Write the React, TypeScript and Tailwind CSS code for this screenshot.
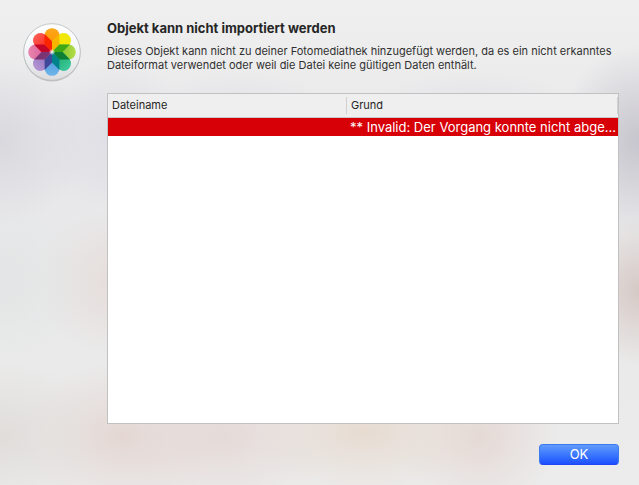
import { useState } from 'react'

interface FailedImport {
  fileName: string
  reason: string
}

const failedImports: FailedImport[] = [
  { fileName: '', reason: '** Invalid: Der Vorgang konnte nicht abge...' },
]

// Clockwise from the top
const petals = [
  { from: '#ff9500', to: '#fba81c' },
  { from: '#ffe600', to: '#ece80d' },
  { from: '#7fc62c', to: '#b5dc4a' },
  { from: '#1fb06a', to: '#3ec9a0' },
  { from: '#4f9ade', to: '#70b6ea' },
  { from: '#9277c4', to: '#b594d2' },
  { from: '#d8609c', to: '#e886ae' },
  { from: '#ff2a1c', to: '#fb5e55' },
]

// Where each petal crosses the next one
const overlaps = ['#f7b500', '#3fa814', '#0b7f35', '#00838a', '#3f4798', '#793574', '#c3062b', '#fb2500']

function PhotosIcon() {
  return (
    <svg viewBox="-32 -32 64 64" className="block w-16 h-16" role="img" aria-label="Fotos">
      <defs>
        <linearGradient id="disc" x1="0" y1="0" x2="0" y2="1">
          <stop offset="0" stopColor="#ffffff" />
          <stop offset="0.5" stopColor="#f3f6f8" />
          <stop offset="1" stopColor="#dcdcde" />
        </linearGradient>
        <radialGradient id="glow">
          <stop offset="0" stopColor="#ffffff" />
          <stop offset="0.35" stopColor="#ffffff" stopOpacity="0.7" />
          <stop offset="1" stopColor="#ffffff" stopOpacity="0" />
        </radialGradient>
        {petals.map((petal, i) => (
          <linearGradient key={i} id={`petal-${i}`} x1="0" y1="1" x2="0" y2="0">
            <stop offset="0.3" stopColor={petal.from} />
            <stop offset="1" stopColor={petal.to} />
          </linearGradient>
        ))}
      </defs>
      <circle cy="0.8" r="28.6" fill="#000000" opacity="0.18" />
      <circle r="28.3" fill="url(#disc)" stroke="#b9bbbd" strokeWidth="0.8" />
      {petals.map((_, i) => (
        <path
          key={i}
          d="M0 0L-7.4 -7.4V-16.4A7.4 7.4 0 0 1 7.4 -16.4V-7.4Z"
          fill={`url(#petal-${i})`}
          transform={`rotate(${i * 45})`}
        />
      ))}
      {overlaps.map((color, i) => (
        <path
          key={i}
          d="M0 0V-10.5L7.4 -17.9L7.4 -7.4Z"
          fill={color}
          transform={`rotate(${i * 45})`}
        />
      ))}
      <circle r="3.2" fill="url(#glow)" />
    </svg>
  )
}

function ImportErrorTable({ rows }: { rows: FailedImport[] }) {
  return (
    <div className="flex-1 bg-white border border-[#c1c1c1]">
      <table className="w-full table-fixed border-separate border-spacing-0 text-left">
        <thead className="bg-[#efefef] text-[11px] text-[#262626]">
          <tr className="h-6">
            <th scope="col" className="w-[239px] p-0 font-normal border-b border-[#c8c8c8]">
              <div className="h-[17px] pl-1 leading-[17px] border-r border-[#d0d0d0]">Dateiname</div>
            </th>
            <th scope="col" className="p-0 font-normal border-b border-[#c8c8c8]">
              <div className="h-[17px] pl-1 leading-[17px] border-r border-[#d0d0d0]">Grund</div>
            </th>
          </tr>
        </thead>
        <tbody className="text-[13px] text-white">
          {rows.map((row, i) => (
            <tr key={i} className="h-[18px] bg-[#d70007]">
              <td className="p-0 pl-1 leading-[18px] truncate">{row.fileName}</td>
              <td className="p-0 pl-[3px] leading-[18px] truncate">{row.reason}</td>
            </tr>
          ))}
        </tbody>
      </table>
    </div>
  )
}

export default function App() {
  const [open, setOpen] = useState(true)

  if (!open) return null

  return (
    <main
      role="alertdialog"
      aria-labelledby="title"
      aria-describedby="message"
      className="flex min-h-screen gap-[23px] p-5 font-['Inter',sans-serif] bg-[#ebebeb] bg-[radial-gradient(ellipse_90px_85px_at_0%_29%,#d9d8de,transparent),radial-gradient(ellipse_80px_75px_at_18%_28%,#dedee5,transparent),radial-gradient(ellipse_100px_50px_at_37%_25%,#e0e0e5,transparent),radial-gradient(ellipse_110px_50px_at_74%_25%,#e0e0e5,transparent),radial-gradient(ellipse_80px_95px_at_100%_29%,#c7c5cd,transparent),radial-gradient(ellipse_90px_80px_at_0%_58%,#e2e5e5,transparent),radial-gradient(ellipse_90px_75px_at_19%_58%,#e5dcd9,transparent),radial-gradient(ellipse_60px_75px_at_100%_60%,#d6c9c5,transparent),radial-gradient(ellipse_110px_75px_at_0%_90%,#e0ddda,transparent),radial-gradient(ellipse_100px_75px_at_19%_90%,#e4d7d3,transparent),radial-gradient(ellipse_110px_75px_at_35%_90%,#e5dad7,transparent),radial-gradient(ellipse_120px_65px_at_57%_89%,#e7dbd1,transparent),radial-gradient(ellipse_80px_75px_at_75%_90%,#e5d9d5,transparent),linear-gradient(#efefef,#e8e8ea_35%,#eaeaea_75%,#ececec)]"
    >
      <div className="shrink-0">
        <PhotosIcon />
      </div>

      <div className="flex flex-1 flex-col min-w-0">
        <h1 id="title" className="text-[13px] leading-4 font-bold text-[#262626]">
          Objekt kann nicht importiert werden
        </h1>
        <p id="message" className="mt-2 mb-[21px] text-[11px] leading-[14px] text-[#303030]">
          Dieses Objekt kann nicht zu deiner Fotomediathek hinzugefügt werden, da es ein nicht erkanntes
          Dateiformat verwendet oder weil die Datei keine gültigen Daten enthält.
        </p>

        <ImportErrorTable rows={failedImports} />

        <button
          type="button"
          onClick={() => setOpen(false)}
          className="self-end w-20 h-[21px] mt-5 rounded-[4px] border border-[#3a7bf0] border-b-[#1f45f5] bg-linear-to-b from-[#619bfb] to-[#1f4dff] text-[13px] leading-[19px] text-white"
        >
          OK
        </button>
      </div>
    </main>
  )
}
